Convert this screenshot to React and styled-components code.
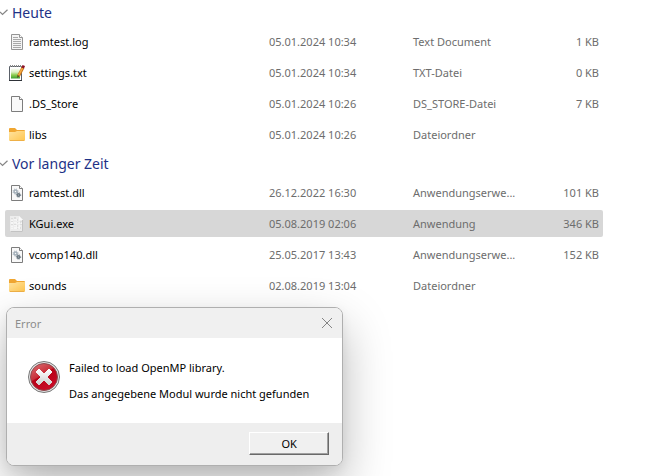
import React, { useState } from "react";
import styled, { createGlobalStyle } from "styled-components";

const groups = [
  {
    title: "Heute",
    files: [
      { name: "ramtest.log", icon: "log", date: "05.01.2024 10:34", type: "Text Document", size: "1 KB" },
      { name: "settings.txt", icon: "notepad", date: "05.01.2024 10:34", type: "TXT-Datei", size: "0 KB" },
      { name: ".DS_Store", icon: "blank", date: "05.01.2024 10:26", type: "DS_STORE-Datei", size: "7 KB" },
      { name: "libs", icon: "folder", date: "05.01.2024 10:26", type: "Dateiordner", size: "" },
    ],
  },
  {
    title: "Vor langer Zeit",
    files: [
      { name: "ramtest.dll", icon: "dll", date: "26.12.2022 16:30", type: "Anwendungserwe...", size: "101 KB" },
      { name: "KGui.exe", icon: "exe", date: "05.08.2019 02:06", type: "Anwendung", size: "346 KB" },
      { name: "vcomp140.dll", icon: "dll", date: "25.05.2017 13:43", type: "Anwendungserwe...", size: "152 KB" },
      { name: "sounds", icon: "folder", date: "02.08.2019 13:04", type: "Dateiordner", size: "" },
    ],
  },
];

const Page = () => (
  <>
    <path d="M2.5 .5h8l3 3v12h-11z" fill="#f9f9f9" stroke="#7d7d7d" />
    <path d="M10.5 .5v3h3" fill="#fff" stroke="#7d7d7d" />
  </>
);

const Gear = ({ x, y, r, color }) => (
  <g transform={`translate(${x} ${y})`}>
    <circle r={r} fill="none" stroke={color} strokeWidth="1.5" />
    <circle r={r + 1} fill="none" stroke={color} strokeWidth="1" strokeDasharray="1 1" />
  </g>
);

const drawings = {
  log: (
    <>
      <path d="M2.5 .5h8l3 3v12h-11z" fill="#f4f4f4" stroke="#949494" />
      <path d="M10.5 .5v3h3" fill="#fff" stroke="#949494" />
      <path d="M4 3.5h5M4 5.5h8M4 7.5h8M4 9.5h8M4 11.5h8M4 13.5h8" stroke="#a8a8a8" />
    </>
  ),
  notepad: (
    <>
      <defs>
        <linearGradient id="notepadGreen" x1="0" y1="0" x2="0" y2="1">
          <stop offset="0" stopColor="#fafdf4" />
          <stop offset=".35" stopColor="#dcefc4" />
          <stop offset=".65" stopColor="#8bcb4e" />
          <stop offset="1" stopColor="#3a9d2c" />
        </linearGradient>
      </defs>
      <path d="M.5 1.5h12v14h-12z" fill="#fff" stroke="#5a6068" />
      <path d="M0 15.5h13" stroke="#2e3238" />
      <path d="M2 3.5h9v10h-9z" fill="url(#notepadGreen)" />
      <path d="M1 1h11" stroke="#8a8a8a" strokeWidth="2" strokeDasharray="1 1" />
      <path d="M14 2.5L9.5 11" stroke="#c9771c" strokeWidth="3" />
      <path d="M13.5 3L9.5 10.5" stroke="#f8ae45" strokeWidth="1.5" />
      <path d="M13.5 0l2.5 1-1 2.5-2.5-1z" fill="#8c1128" />
      <path d="M8.5 10l1.8 1-2 2z" fill="#4c3522" />
    </>
  ),
  blank: <Page />,
  folder: (
    <>
      <defs>
        <linearGradient id="folderFront" x1="0" y1="0" x2="1" y2="1">
          <stop offset="0" stopColor="#ffe3a0" />
          <stop offset="1" stopColor="#ffc54d" />
        </linearGradient>
      </defs>
      <path d="M0 2a1 1 0 0 1 1-1h5l2 2h7a1 1 0 0 1 1 1v3H0z" fill="#f0a631" />
      <path d="M0 5h6l2-1h8v9a1 1 0 0 1-1 1H1a1 1 0 0 1-1-1z" fill="url(#folderFront)" />
      <path d="M1 13.5h14" stroke="#eeb047" />
    </>
  ),
  dll: (
    <>
      <Page />
      <Gear x={6.5} y={6.5} r={1.5} color="#a3afb9" />
      <Gear x={9.5} y={10} r={1.2} color="#697781" />
    </>
  ),
  exe: (
    <>
      <path d="M1 0h9l4 4v12H1z" fill="#ededed" />
      <path d="M1.5 15.5h12V4" fill="none" stroke="#c3c3c3" />
      <path d="M3 2v11M6 1v12M9 3v10M12 5v9" stroke="#cdcdcd" strokeDasharray="2 1 1 2" />
      <path d="M2 4h9M2 7h11M2 10h10M2 12h11" stroke="#fff" strokeDasharray="2 1 3 1" />
      <path d="M10 0v4h4" fill="#fafafa" />
    </>
  ),
};

const FileIcon = ({ kind }) => (
  <Icon viewBox="0 0 16 16" aria-hidden="true">
    {drawings[kind]}
  </Icon>
);

const FileGroup = ({ group, selected, onSelect }) => {
  const [open, setOpen] = useState(true);

  return (
    <section>
      <GroupButton aria-expanded={open} onClick={() => setOpen(!open)}>
        <svg width="8" height="8" viewBox="0 0 8 8" aria-hidden="true">
          <path d="M0 3l2.5 2.5L7.5 .8" fill="none" stroke="#858585" strokeWidth="1.2" />
        </svg>
        {group.title}
      </GroupButton>
      {open && (
        <FileTable aria-label={group.title}>
          <colgroup>
            <col />
            <DateCol />
            <TypeCol />
            <SizeCol />
          </colgroup>
          <tbody>
            {group.files.map((file) => (
              <FileRow
                key={file.name}
                $selected={selected === file.name}
                onClick={() => onSelect(file.name)}
              >
                <td>
                  <FileName>
                    <FileIcon kind={file.icon} />
                    {file.name}
                  </FileName>
                </td>
                <td>{file.date}</td>
                <td>{file.type}</td>
                <td>{file.size}</td>
              </FileRow>
            ))}
          </tbody>
        </FileTable>
      )}
    </section>
  );
};

const ErrorIcon = () => (
  <StatusIcon viewBox="0 0 32 32" aria-hidden="true">
    <defs>
      <linearGradient id="errorRed" x1="0" y1="0" x2="0.6" y2="1">
        <stop offset="0" stopColor="#de7377" />
        <stop offset=".48" stopColor="#c8303a" />
        <stop offset=".52" stopColor="#b80319" />
        <stop offset="1" stopColor="#c90a26" />
      </linearGradient>
      <linearGradient id="errorCross" x1="0" y1="0" x2="0" y2="1">
        <stop offset="0" stopColor="#fff" />
        <stop offset="1" stopColor="#cfcfcf" />
      </linearGradient>
    </defs>
    <circle cx="16" cy="16" r="15.5" fill="#e4e4e4" stroke="#777" />
    <circle cx="16" cy="16" r="13.5" fill="url(#errorRed)" stroke="#8e4b4f" />
    <path
      d="M11 8l5 5 5-5 3 3-5 5 5 5-3 3-5-5-5 5-3-3 5-5-5-5z"
      fill="url(#errorCross)"
      stroke="url(#errorCross)"
      strokeLinejoin="round"
    />
  </StatusIcon>
);

const ErrorDialog = ({ onClose }) => (
  <Dialog role="alertdialog" aria-labelledby="dialog-title">
    <TitleBar>
      <span id="dialog-title">Error</span>
      <CloseButton aria-label="Close" onClick={onClose}>
        <svg width="12" height="12" viewBox="0 0 12 12" aria-hidden="true">
          <path d="M1 1l10 10M11 1L1 11" stroke="#858585" />
        </svg>
      </CloseButton>
    </TitleBar>
    <Message>
      <ErrorIcon />
      <div>
        <p>Failed to load OpenMP library.</p>
        <p>Das angegebene Modul wurde nicht gefunden</p>
      </div>
    </Message>
    <Actions>
      <OkButton onClick={onClose}>OK</OkButton>
    </Actions>
  </Dialog>
);

const App = () => {
  const [selected, setSelected] = useState("KGui.exe");
  const [showError, setShowError] = useState(true);

  return (
    <>
      <GlobalStyle />
      <Explorer>
        {groups.map((group) => (
          <FileGroup key={group.title} group={group} selected={selected} onSelect={setSelected} />
        ))}
      </Explorer>
      {showError && <ErrorDialog onClose={() => setShowError(false)} />}
    </>
  );
};

const GlobalStyle = createGlobalStyle`
  * {
    box-sizing: border-box;
  }
  body {
    margin: 0;
    background: #fff;
    color: #000;
    font-family: "Noto Sans", "Open Sans", sans-serif;
    font-size: 11px;
    overflow: hidden;
  }
  button {
    font-family: inherit;
    font-size: inherit;
    padding: 0;
  }
`;

const Explorer = styled.main`
  padding: 1px 51px 0 0;
`;

const GroupButton = styled.button`
  display: flex;
  align-items: center;
  gap: 4px;
  height: 23px;
  border: none;
  background: none;
  color: #1e3287;
  font-size: 14px;
`;

const FileTable = styled.table`
  width: calc(100% - 5px);
  margin-left: 5px;
  table-layout: fixed;
  border-collapse: separate;
  border-spacing: 0 4px;
`;

const DateCol = styled.col`
  width: 144px;
`;

const TypeCol = styled.col`
  width: 120px;
`;

const SizeCol = styled.col`
  width: 76px;
`;

const FileRow = styled.tr`
  height: 27px;
  background: ${(props) => (props.$selected ? "#d7d7d7" : "transparent")};
  color: #6d6d6d;
  td {
    padding: 0 6px;
    white-space: nowrap;
  }
  td:first-child {
    padding: 0 4px;
    color: #000;
    border-radius: 2px 0 0 2px;
  }
  td:last-child {
    padding: 0 4px;
    text-align: right;
    border-radius: 0 2px 2px 0;
  }
`;

const FileName = styled.span`
  display: flex;
  align-items: center;
  gap: 4px;
`;

const Icon = styled.svg`
  width: 16px;
  height: 16px;
  flex: none;
`;

const Dialog = styled.div`
  position: absolute;
  top: 307px;
  left: 6px;
  border: 1px solid #afafaf;
  border-radius: 8px;
  background: #fff;
  overflow: hidden;
  box-shadow: 0 20px 48px rgba(0, 0, 0, 0.28), 0 4px 12px rgba(0, 0, 0, 0.06);
`;

const TitleBar = styled.div`
  display: flex;
  align-items: center;
  justify-content: space-between;
  height: 30px;
  padding: 0 9px 0 8px;
  background: #f0f0f0;
  color: #8c8c8c;
`;

const CloseButton = styled.button`
  display: flex;
  border: none;
  background: none;
`;

const Message = styled.div`
  display: flex;
  gap: 9px;
  padding: 17px 33px 16px 21px;
  p {
    margin: 0;
    line-height: 26px;
    white-space: nowrap;
  }
`;

const StatusIcon = styled.svg`
  width: 32px;
  height: 32px;
  flex: none;
  margin-top: 6px;
`;

const Actions = styled.div`
  display: flex;
  justify-content: flex-end;
  padding: 9px 13px 10px;
  background: #eee;
`;

const OkButton = styled.button`
  width: 80px;
  height: 23px;
  border: 1px solid;
  border-color: #fff #696969 #696969 #fff;
  box-shadow: inset -1px -1px #a0a0a0;
  background: #f0f0f0;
  color: #000;
`;

export default App;
